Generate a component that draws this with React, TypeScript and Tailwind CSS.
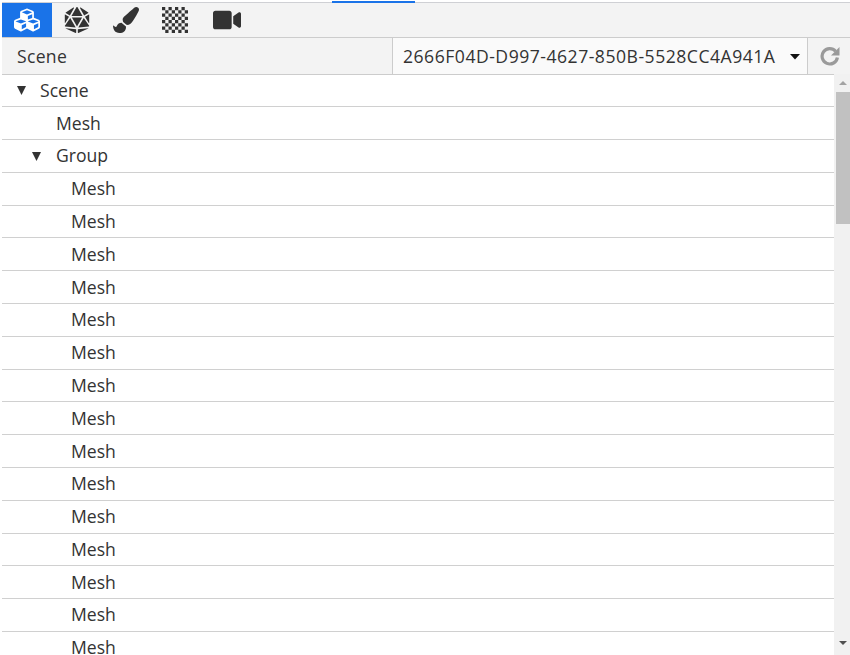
import React from "react";
import { FaCubes, FaDiceD20, FaPaintBrush, FaVideo } from "react-icons/fa";

function Checker() {
  const cells: React.ReactNode[] = [];
  for (let y = 0; y < 8; y++)
    for (let x = 0; x < 8; x++)
      if ((x + y) % 2 === 0) cells.push(<rect key={`${x}-${y}`} x={x * 3.15} y={y * 3.15} width={3.15} height={3.15} fill="#333" />);
  return (
    <svg width="26" height="26" viewBox="0 0 25.2 25.2">
      {cells}
    </svg>
  );
}

const rows: { label: string; indent: string; arrow?: boolean }[] = [
  { label: "Scene", indent: "pl-[38px]", arrow: true },
  { label: "Mesh", indent: "pl-[54px]" },
  { label: "Group", indent: "pl-[54px]", arrow: true },
  ...Array.from({ length: 15 }, () => ({ label: "Mesh", indent: "pl-[69px]" })),
];

export default function App() {
  return (
    <div className="relative h-[655px] w-[850px] overflow-hidden bg-white text-[#333] [font-family:'Open_Sans',sans-serif]">
      <div className="h-[2px]" />
      <div className="absolute left-[332px] top-[1px] h-[2px] w-[83px] bg-[#1a73e8]" />
      <div className="ml-[2px] flex h-[36px] items-stretch border-t border-b border-t-[#cfd0d4] border-b-[#cccccc] bg-[#f3f3f3]">
        <div className="flex w-[50px] items-center justify-center bg-[#1a73e8] text-white">
          <FaCubes size={26} />
        </div>
        <div className="flex w-[49px] items-center justify-center">
          <FaDiceD20 size={26} />
        </div>
        <div className="flex w-[49px] items-center justify-center">
          <FaPaintBrush size={26} />
        </div>
        <div className="flex w-[50px] items-center justify-center">
          <Checker />
        </div>
        <div className="flex w-[54px] items-center justify-center">
          <FaVideo size={28} />
        </div>
      </div>
      <div className="ml-[2px] flex h-[37.4px] items-stretch border-b border-b-[#cccccc] bg-[#f3f3f3]">
        <div className="flex w-[390px] items-center pl-[15px] text-[17.6px] tracking-[0.3px]">Scene</div>
        <div className="flex w-[416px] items-center border-x border-x-[#cccccc] bg-[#fafafa] pl-[10px] pr-[7px]">
          <span className="flex-1 whitespace-nowrap text-[17.6px] tracking-[0.5px]">2666F04D-D997-4627-850B-5528CC4A941A</span>
          <svg width="10" height="6" viewBox="0 0 10 6" className="mt-[1px]">
            <path d="M0 0h10L5 5.5z" fill="#111" />
          </svg>
        </div>
        <div className="flex flex-1 items-center justify-center pl-[2px]">
          <svg width="20" height="20" viewBox="0 0 20 20">
            <path d="M15.6 5.2A7.7 7.7 0 1 0 17.4 11.5" fill="none" stroke="#9a9a9a" strokeWidth="3.2" />
            <path d="M19.5 1v8.5h-8.5z" fill="#9a9a9a" />
          </svg>
        </div>
      </div>
      <div className="ml-[2px] -mt-[1px] flex h-[581px]">
        <div className="min-w-0 flex-1 overflow-hidden">
          {rows.map((r, i) => (
            <div key={i} className={`relative flex h-[32.8px] items-center border-b border-b-[#d0d0d0] pt-[0.5px] text-[17.6px] leading-none ${r.indent}`}>
              {r.arrow && (
                <svg width="9" height="9" viewBox="0 0 9 9" className="absolute" style={{ left: i === 0 ? 15 : 30 }}>
                  <path d="M0 0h9L4.5 9z" fill="#333" />
                </svg>
              )}
              {r.label}
            </div>
          ))}
        </div>
        <div className="flex w-[16px] flex-col bg-[#f1f1f1]">
          <div className="flex h-[18px] items-center justify-center pl-[2px]">
            <svg width="8" height="4" viewBox="0 0 8 4"><path d="M4 0l4 4H0z" fill="#a3a3a3" /></svg>
          </div>
          <div className="ml-[2px] h-[132px] bg-[#c1c1c1]" />
          <div className="flex-1" />
          <div className="flex h-[14px] items-start justify-center pl-[2px]">
            <svg width="8" height="4" viewBox="0 0 8 4"><path d="M0 0h8L4 4z" fill="#505050" /></svg>
          </div>
        </div>
      </div>
    </div>
  );
}
